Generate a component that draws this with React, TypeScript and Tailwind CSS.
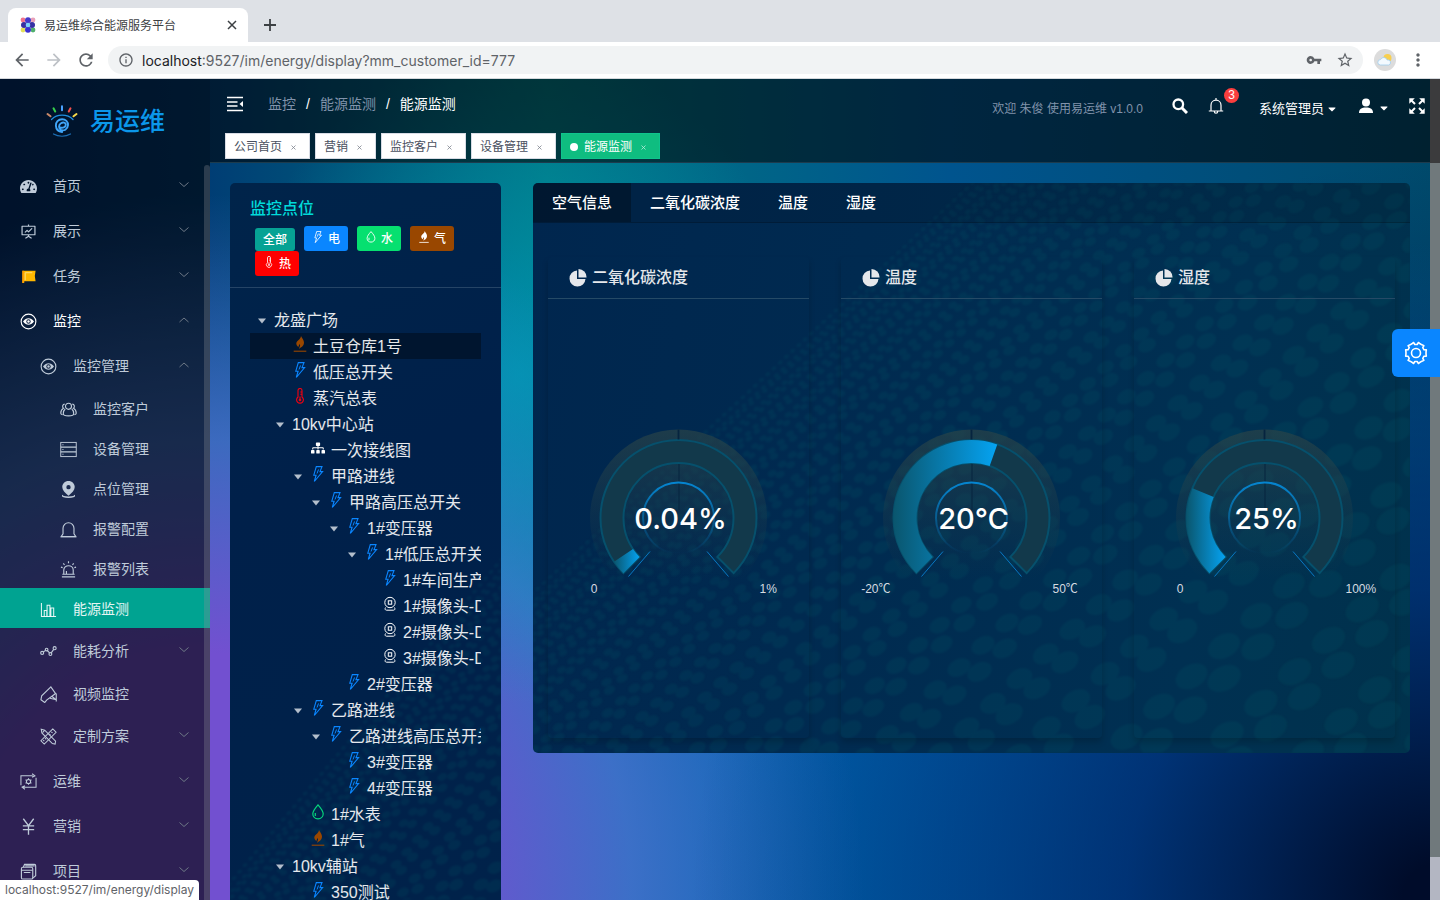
import { ReactNode, useState } from "react";
import clsx from "clsx";
import { AiOutlineFundProjectionScreen } from "react-icons/ai";
import { FaCaretDown, FaSitemap, FaTachometerAlt } from "react-icons/fa";
import { MdArrowBack, MdArrowForward, MdInfoOutline, MdMoreVert, MdRefresh, MdStarBorder, MdVpnKey } from "react-icons/md";

interface IconProps {
  className?: string;
  box?: number;
  width?: number;
  children: ReactNode;
}

const Icon = ({ className, box = 18, width = 1, children }: IconProps) => (
  <svg viewBox={`0 0 ${box} ${box}`} className={clsx("shrink-0", className)} fill="none" stroke="currentColor" strokeWidth={width} aria-hidden="true">
    {children}
  </svg>
);

/* ---------- icons ---------- */

const EyeIcon = () => (
  <Icon className="size-[17px]" width={1.2}>
    <circle cx="9" cy="9" r="7.8" />
    <path d="M3.2 9C5 6.600 7 5.600 9 5.600S13 6.600 14.800 9C13 11.400 11 12.400 9 12.400S5 11.400 3.200 9Z" fill="currentColor" stroke="none" />
    <circle cx="9" cy="9" r="2.300" className="fill-[#10203f]" stroke="none" />
    <circle cx="9" cy="9" r="1.300" fill="currentColor" stroke="none" />
  </Icon>
);

const FlagIcon = () => (
  <Icon className="size-[17px]">
    <path d="M2.500 3h14l-.8 5.500.8 5.500H4.500v2h-2z" fill="#ffb800" stroke="none" />
    <path d="M2.500 3h1.500v13H2.500z" fill="#ff9800" stroke="none" />
    <path d="M5.500 13V5H13" stroke="#ffe082" />
  </Icon>
);

const TeamIcon = () => (
  <Icon className="size-[17px]" width={1.2}>
    <circle cx="9" cy="5.600" r="3.200" />
    <path d="M5.500 8.500c-1.300 1-2 3-2 5 0 1.500 2.200 2.300 5.500 2.300s5.500-.8 5.500-2.300c0-2-.7-4-2-5" />
    <path d="M5 3.300a2.400 2.400 0 0 0-1.300 4.300C1.700 8.600.8 10.500.8 13c0 1 .7 1.300 2 1.500M13 3.300a2.400 2.400 0 0 1 1.300 4.300c2 1 2.900 2.900 2.900 5.400 0 1-.7 1.300-2 1.500" />
  </Icon>
);

const RackIcon = () => (
  <Icon className="size-[17px]">
    <rect x=".8" y="1.500" width="16.400" height="15" />
    <path d="M.8 6.500h16.400M.8 11.500h16.400" strokeWidth="1.400" />
    <path d="M2.500 4h1.200M2.500 9h1.200M2.500 14h1.200" />
  </Icon>
);

const PinIcon = () => (
  <Icon className="size-[17px]">
    <path fillRule="evenodd" d="M9 0c3.800 0 6.600 2.800 6.600 6.400 0 3.400-2.800 6-6.600 9.100-3.800-3.100-6.600-5.700-6.600-9.100C2.400 2.800 5.200 0 9 0zm0 4.200a2.300 2.300 0 1 0 0 4.600 2.300 2.300 0 0 0 0-4.600z" fill="currentColor" stroke="none" />
    <path d="M3 15c-1 1.500 1.500 2.200 6 2.200s7-.7 6-2.200" strokeWidth="1.400" />
  </Icon>
);

const AlarmIcon = () => (
  <Icon className="size-[17px]" width={1.2}>
    <path d="M3.200 13.500V7.800C3.200 4.300 5.800 1.800 9 1.800s5.800 2.500 5.800 6v5.700l2 3H1.200z" />
    <path d="M1 16.600h16" />
  </Icon>
);

const SirenIcon = () => (
  <Icon className="size-[17px]" width={1.2}>
    <path d="M4 14V9.600C4 6.900 6.300 5 9 5s5 1.900 5 4.600V14M2 16.800h14M2.500 14h13M6.800 14v-3.500" />
    <path d="M9 .3v2M3.500 2.500l1.300 1.500M14.500 2.500l-1.300 1.500M1 6.500l1.800.5M17 6.500l-1.800.5" />
  </Icon>
);

const BarIcon = () => (
  <Icon className="size-[17px]" width={1.1}>
    <path d="M1.500 2v14.500h15.500" />
    <path d="M4.500 16.500V10h2.700v6.500M7.500 16.500V4.500h3v12M11.500 16.500V7.500h3v9" />
  </Icon>
);

const TrendIcon = () => (
  <Icon className="size-[17px]" width={1.2}>
    <circle cx="2.300" cy="10.500" r="1.600" />
    <circle cx="7" cy="7" r="1.400" />
    <circle cx="11" cy="11.700" r="1.500" />
    <circle cx="15.500" cy="5.500" r="1.600" />
    <path d="m3.500 9.400 2.300-1.500M7.900 8.200l2.300 2.300M11.900 10.500l2.600-3.700" />
  </Icon>
);

const CameraIcon = () => (
  <Icon className="size-[17px]" width={1.2}>
    <path d="M11.500 1 1.800 10.300l-.8 4.200 4 3 2-2.500 9.500-7z" />
    <path d="M17.200 8v8.500M10.500 13l6.700 1.500M12.500 10.800l4.700 4" />
  </Icon>
);

const DesignIcon = () => (
  <Icon className="size-[17px]" width={1.1}>
    <path d="m1.300 1.300 3.700 1L16.500 14l-.5 3-2.900-.5L2 5.200z" />
    <path d="m13.500 1 3.500 3.500L4.500 17 1 13.500zM12 4l1.300 1.300M9.800 6.200l1.300 1.300M5.300 10.700l1.300 1.300M3.300 12.700l1.300 1.300" />
    <path d="m5 2.300-2.300 2.500" />
  </Icon>
);

const MaintainIcon = () => (
  <Icon className="size-[17px]" width={1.1}>
    <path d="M13.500 3H1v10M3.500 15H17V5M12.800.8l3 2.200-3 1.500M5.200 17.200l-3-2.200 3-1.500" />
    <circle cx="9" cy="9" r="2.200" />
    <path d="M9 5.500v1.300M9 11.200v1.300M5.900 7.200l1.200.7M10.900 10.100l1.200.7M5.900 10.800l1.200-.7M10.900 7.900l1.200-.7" />
  </Icon>
);

const YenIcon = () => (
  <Icon className="size-[17px]" width={1.400}>
    <path d="M3.500.8 9 8l5.500-7.200M9 8v9.800M3 8.300h12M3 12.300h12" />
  </Icon>
);

const ProjectIcon = () => (
  <Icon className="size-[17px]" width={1.200}>
    <rect x="1.500" y="4.500" width="12" height="12.500" rx="1.500" />
    <path d="M3.500 4.500 4.800 1.500h10.500a1.300 1.300 0 0 1 1.300 1.300v10.700l-3 2.500M1.500 7.700h12M4 10h7M5.500 3h10" />
  </Icon>
);

const BoltIcon = () => (
  <Icon box={16} className="h-4 w-4">
    <path d="M6.300.6h5.700L10 5.600h2.600L4.300 15.500l1.800-6.300H3.800z" strokeWidth="1.100" />
    <path d="M8.500 3.500 7 7.500" />
  </Icon>
);

const DropIcon = () => (
  <Icon box={16} className="h-4 w-4" width={1.200}>
    <path d="M8 .8c2.800 3.200 5.200 6.100 5.200 9 0 3-2.200 5-5.200 5s-5.200-2-5.200-5c0-2.900 2.400-5.800 5.200-9z" />
    <path d="M5.300 9v3" />
  </Icon>
);

const FlameIcon = () => (
  <Icon box={16} className="h-4 w-4">
    <path d="M9 0c.8 2.300 3 3.700 3 6.500 0 2.300-1.400 4.200-3.200 5-.6.300-.9.800-1.100 1.500-.5-.7-.4-1.500.1-2.400.5-1 .3-2-.3-2.600-.2 1.300-1 1.800-1 3C5 10.200 4.200 8.800 4.300 7.300 4.500 4.700 8.700 3.500 9 0z" fill="currentColor" stroke="none" />
    <path d="M1.700 15.200h12.600" strokeWidth="1.100" />
  </Icon>
);

const HeatIcon = () => (
  <Icon box={16} className="h-4 w-4" width={1.100}>
    <path d="M6 9V2.500a2 2 0 0 1 4 0V9a3.400 3.400 0 1 1-4 0z" />
    <path d="M8 8.500v3M8.300 4h1.700M8.300 6.300h1.700" />
    <circle cx="8" cy="12" r=".8" />
  </Icon>
);

const WebcamIcon = () => (
  <Icon box={16} className="h-4 w-4" width={1}>
    <circle cx="8" cy="6.500" r="5.200" />
    <rect x="6.300" y="4.800" width="3.400" height="3.400" />
    <path d="M3.500 11.500c-.8 1.500-.3 2.700 1 2.700h7c1.300 0 1.800-1.200 1-2.700" />
  </Icon>
);

const PieIcon = () => (
  <Icon className="size-[18px] text-gray-200">
    <path d="M8 1.500a8 8 0 1 0 8.500 8.500H8z" fill="currentColor" stroke="none" />
    <path d="M9.500 0v8.500h8A8 8 0 0 0 9.500 0z" fill="currentColor" stroke="none" />
  </Icon>
);

// six lobes round a hub
const gearPath = () => {
  const pts: string[] = [];
  for (let i = 0; i < 6; i++) {
    const base = i * 60;
    [[-22, 8.600], [-17, 10.800], [-6, 10.100], [6, 10.100], [17, 10.800], [22, 8.600]].forEach(([a, r]) => {
      const t = ((base + a) * Math.PI) / 180;
      pts.push(`${(12 + Math.cos(t) * r).toFixed(2)} ${(12 + Math.sin(t) * r).toFixed(2)}`);
    });
  }
  return `M${pts.join("L")}Z`;
};

const Logo = () => (
  <svg viewBox="0 0 32 32" className="size-8" fill="none" strokeLinecap="round" aria-hidden="true">
    <path d="m1.500 9 3 2.300" stroke="#c98a6a" strokeWidth="2" />
    <path d="m7.500 3.300 1.700 3.200" stroke="#35d04c" strokeWidth="2" />
    <path d="M16 1.300v4" stroke="#4aa3ff" strokeWidth="2" />
    <path d="m24.500 3.300-1.700 3.200" stroke="#f0504d" strokeWidth="2" />
    <path d="m30.500 9-3 2.300" stroke="#f4d94a" strokeWidth="2" />
    <path d="M5.500 14.500C9 11 12.500 10.200 16 10.200s7.500.8 11 4.300" stroke="#1f8fe0" strokeWidth="1.300" />
    <path d="M13.800 22.300c3 1 6-.2 6-2.500 0-2.200-2.600-2.900-4.800-1.600-2.500 1.600-2.600 5.200-.2 6.600 2.900 1.600 6.900-.3 7.200-4.500.2-3.900-2.500-6-5.900-6-3.900 0-6.400 2.900-6.200 6.300.2 3.700 2.700 6 6.200 6.400" stroke="#3fa5f8" strokeWidth="1.900" />
    <path d="M7.500 29c5 3 12 3 17 0" stroke="#1b6fb5" strokeWidth="1.200" />
  </svg>
);

const Favicon = () => (
  <svg viewBox="0 0 16 16" className="size-4" aria-hidden="true">
    <circle cx="3" cy="3" r="2.400" fill="#f0738d" />
    <circle cx="13" cy="3" r="2.400" fill="#e8a0b9" />
    <circle cx="3" cy="13" r="2.400" fill="#e3e05a" />
    <circle cx="13" cy="13" r="2.400" fill="#4fae6d" />
    <circle cx="8" cy="3.300" r="3" fill="#4338ca" />
    <circle cx="8" cy="12.700" r="3" fill="#3a2fd0" />
    <circle cx="4" cy="8" r="3" fill="#3730a3" />
    <circle cx="12" cy="8" r="3" fill="#3730a3" />
    <circle cx="8" cy="8" r="2.300" fill="#7dd3fc" />
  </svg>
);

/* ---------- browser frame ---------- */

const BrowserBar = () => (
  <div className="shrink-0 font-[Inter,'Noto_Sans_CJK_SC',sans-serif]">
    <div className="flex h-[42px] items-end bg-[#dee1e6] px-2">
      <div className="flex h-[34px] w-60 items-center rounded-t-lg bg-white pr-[11px] pl-3">
        <Favicon />
        <span className="ml-2 flex-1 pt-px text-[12px] text-[#3c4043]">易运维综合能源服务平台</span>
        <button aria-label="关闭标签页" className="text-[#3c4043]">
          <Icon box={10} width={1.500} className="size-[10px]"><path d="m1 1 8 8M9 1 1 9" /></Icon>
        </button>
      </div>
      <button aria-label="新标签页" className="mb-[11px] ml-4 text-[#3c4043]">
        <Icon box={12} width={1.800} className="size-3"><path d="M6 0v12M0 6h12" /></Icon>
      </button>
    </div>
    <div className="flex h-[37px] items-center border-b border-[#d5d8dc] bg-white pr-3 pl-3 text-[#5f6368]">
      <button aria-label="后退"><MdArrowBack className="size-5" /></button>
      <button aria-label="前进" className="ml-3 text-[#bdc1c6]"><MdArrowForward className="size-5" /></button>
      <button aria-label="刷新" className="ml-3"><MdRefresh className="size-5" /></button>
      <div className="ml-3 flex h-7 flex-1 items-center rounded-full bg-[#f1f3f4] pr-[9px] pl-[10px]">
        <MdInfoOutline className="size-4" />
        <label htmlFor="url" className="ml-2 text-[14px] text-[#202124]">localhost</label>
        <input id="url" defaultValue=":9527/im/energy/display?mm_customer_id=777" className="min-w-0 flex-1 bg-transparent text-[14px] outline-none" />
        <MdVpnKey className="size-4" />
        <MdStarBorder className="ml-[14px] size-[18px]" />
      </div>
      <span className="ml-[11px] flex size-[22px] items-center justify-center rounded-full bg-[#dcdcdc]">
        <svg viewBox="0 0 16 16" className="size-4" aria-hidden="true">
          <circle cx="10.500" cy="6" r="4" fill="#f8cf4e" />
          <path d="M3.500 13a2.700 2.700 0 0 1 0-5.400 3.600 3.600 0 0 1 6.700.4 2.600 2.600 0 0 1 1.500 5z" fill="#f3faff" stroke="#9fcdec" strokeWidth=".8" />
        </svg>
      </span>
      <button aria-label="更多" className="ml-3"><MdMoreVert className="size-5" /></button>
    </div>
  </div>
);

/* ---------- sidebar ---------- */

interface MenuItem {
  label: string;
  icon: ReactNode;
  level: 0 | 1 | 2;
  arrow?: "up" | "down";
  open?: boolean;
  active?: boolean;
}

const menu: MenuItem[] = [
  { label: "首页", icon: <FaTachometerAlt className="size-[17px]" />, level: 0, arrow: "down" },
  { label: "展示", icon: <AiOutlineFundProjectionScreen className="size-[17px]" />, level: 0, arrow: "down" },
  { label: "任务", icon: <FlagIcon />, level: 0, arrow: "down" },
  { label: "监控", icon: <EyeIcon />, level: 0, arrow: "up", open: true },
  { label: "监控管理", icon: <EyeIcon />, level: 1, arrow: "up" },
  { label: "监控客户", icon: <TeamIcon />, level: 2 },
  { label: "设备管理", icon: <RackIcon />, level: 2 },
  { label: "点位管理", icon: <PinIcon />, level: 2 },
  { label: "报警配置", icon: <AlarmIcon />, level: 2 },
  { label: "报警列表", icon: <SirenIcon />, level: 2 },
  { label: "能源监测", icon: <BarIcon />, level: 1, active: true },
  { label: "能耗分析", icon: <TrendIcon />, level: 1, arrow: "down" },
  { label: "视频监控", icon: <CameraIcon />, level: 1 },
  { label: "定制方案", icon: <DesignIcon />, level: 1, arrow: "down" },
  { label: "运维", icon: <MaintainIcon />, level: 0, arrow: "down" },
  { label: "营销", icon: <YenIcon />, level: 0, arrow: "down" },
  { label: "项目", icon: <ProjectIcon />, level: 0, arrow: "down" },
];

const indent = ["pl-5", "pl-10", "pl-[60px]"];

const Sidebar = () => (
  <aside className="relative flex w-[210px] shrink-0 flex-col overflow-hidden bg-black/60">
    <div className="flex h-[84px] shrink-0 items-center gap-3 pl-[46px]">
      <Logo />
      <h1 className="text-[25px] leading-8 font-medium text-[#0b97ea]">易运维</h1>
    </div>
    <nav className="min-h-0 flex-1 overflow-hidden">
      {menu.map((item) => (
        <a
          key={item.label}
          href="#"
          className={clsx(
            "flex items-center pr-5 text-[14px]",
            indent[item.level],
            item.arrow ? "h-[45px] pt-px" : "h-10 pt-[2px]",
            item.active ? "bg-[#00a391] text-white/90" : item.open ? "text-white" : "text-[#bfcbd9]",
          )}
        >
          {item.icon}
          <span className="ml-4 flex-1">{item.label}</span>
          {item.arrow && (
            <Icon box={12} width={1} className="mb-[2px] size-3 text-[#6d7886]">
              <path d={item.arrow === "down" ? "m1.500 3.500 4.500 4 4.500-4" : "m1.500 8 4.500-4 4.500 4"} />
            </Icon>
          )}
        </a>
      ))}
    </nav>
    <div className="absolute top-[86px] right-0 bottom-0 w-[6px] rounded-t-full bg-[#909399]/30" />
  </aside>
);

/* ---------- header ---------- */

const tags = ["公司首页", "营销", "监控客户", "设备管理", "能源监测"];

const Header = () => (
  <header className="h-[84px] shrink-0 border-b border-[#1d3b4d] bg-black/55">
    <div className="flex h-[50px] items-center pr-[5px] pl-[17px] text-white">
      <button aria-label="收起菜单">
        <Icon box={16} width={1.400} className="size-4">
          <path d="M0 1.500h16M0 6h10.500M0 10h10.500M0 14.500h16" />
          <path d="M16 5v6l-3.500-3z" fill="currentColor" stroke="none" />
        </Icon>
      </button>
      <nav className="ml-[25px] flex items-center text-[14px]">
        <a href="#" className="text-[#8193ab]">监控</a>
        <span className="mx-[10px]">/</span>
        <a href="#" className="text-[#8193ab]">能源监测</a>
        <span className="mx-[10px]">/</span>
        <span>能源监测</span>
      </nav>
      <div className="ml-auto flex items-center pt-2">
        <span className="pt-px text-[12px] text-[#8193ab]">欢迎 朱俊 使用易运维 v1.0.0</span>
        <button aria-label="搜索" className="ml-[29px]">
          <Icon box={16} width={2.300} className="mb-1 size-4"><circle cx="6.300" cy="6.300" r="4.800" /><path d="m9.800 9.800 5.200 5.200" strokeWidth="3" /></Icon>
        </button>
        <button aria-label="通知" className="relative ml-5">
          <Icon box={16} width={1.200} className="mb-1 size-4">
            <path d="M8 0v2M3 12.500V7.200C3 4.300 5.200 2.200 8 2.200s5 2.100 5 5v5.300M.8 13h14.400M6.300 13.500c0 2.300 3.400 2.300 3.400 0" />
          </Icon>
          <span className="absolute -top-[10px] left-4 size-[15px] rounded-full bg-[#fa3e3e] text-center text-[12px] leading-[15px]">3</span>
        </button>
        <button className="ml-[35px] flex items-center pt-px text-[13px]">
          系统管理员 <FaCaretDown className="ml-[2px] size-3" />
        </button>
        <button aria-label="用户" className="ml-5 flex items-center">
          <Icon box={16} className="mb-1 size-4">
            <circle cx="8" cy="4.500" r="4" fill="currentColor" stroke="none" />
            <path d="M1 15c0-4 2.500-5.500 7-5.500s7 1.500 7 5.500z" fill="currentColor" stroke="none" />
          </Icon>
          <FaCaretDown className="ml-1 size-3" />
        </button>
        <button aria-label="全屏" className="ml-[19px]">
          <Icon box={16} width={2} className="mb-1 size-4">
            <path d="m2 2 4 4M14 2l-4 4M2 14l4-4M14 14l-4-4" />
            <path d="M.3.3h5.500L.3 5.800zM15.700.3v5.500L10.200.3zM.3 15.700v-5.500l5.500 5.500zM15.700 15.700h-5.500l5.500-5.500z" fill="currentColor" stroke="none" />
          </Icon>
        </button>
      </div>
    </div>
    <div className="flex gap-[5px] pt-1 pl-[15px]">
      {tags.map((tag, i) => (
        <div
          key={tag}
          className={clsx(
            "flex h-[26px] items-center border px-2 pt-px text-[12px]",
            i === tags.length - 1 ? "border-[#0fc48d] bg-[#0fbd80] text-white" : "border-[#d8dce5] bg-white text-[#495060]",
          )}
        >
          {i === tags.length - 1 && <span className="mr-[6px] size-2 rounded-full bg-white" />}
          <a href="#">{tag}</a>
          <button aria-label={`关闭${tag}`} className="ml-[3px] flex size-4 items-center justify-center pt-px opacity-70">
            <Icon box={5} width={0.8} className="size-[5px]"><path d="m.5.5 4 4M4.500.5l-4 4" /></Icon>
          </button>
        </div>
      ))}
    </div>
  </header>
);

/* ---------- dotted surface behind the cards ---------- */

interface DotsProps {
  w: number;
  h: number;
  from: number;
  angle: number;
}

const DotField = ({ w, h, from, angle }: DotsProps) => {
  const a = (angle * Math.PI) / 180;
  const dots: ReactNode[] = [];
  let v = 0;
  let step = 5;
  let row = 0;
  while (v < w + h) {
    const gap = step * 1.3 + 2;
    for (let s = -w - h; s < w + h; s += gap) {
      const x = (s + (row % 2) * gap * 0.4) * Math.cos(a) + v * Math.sin(a);
      const y = from - s * Math.sin(a) + v * Math.cos(a);
      if (x > -20 && x < w + 20 && y > -20 && y < h + 20) {
        dots.push(<ellipse key={`${row}-${Math.round(s)}`} cx={x} cy={y} rx={step * 0.52} ry={step * 0.36} transform={`rotate(-28 ${x} ${y})`} />);
      }
    }
    v += step;
    step = Math.min(step * 1.055, 34);
    row++;
  }
  return (
    <svg viewBox={`0 0 ${w} ${h}`} preserveAspectRatio="xMidYMid slice" className="pointer-events-none absolute inset-0 h-full w-full fill-[#006870] opacity-15 blur-[1px]" aria-hidden="true">
      {dots}
    </svg>
  );
};

/* ---------- point tree ---------- */

const kinds = {
  bolt: { icon: <BoltIcon />, color: "text-[#0a86ff]" },
  drop: { icon: <DropIcon />, color: "text-[#06d67d]" },
  flame: { icon: <FlameIcon />, color: "text-[#994700]" },
  heat: { icon: <HeatIcon />, color: "text-[#f5000f]" },
  cam: { icon: <WebcamIcon />, color: "text-white" },
  map: { icon: <FaSitemap className="mx-px size-[14px]" />, color: "text-white" },
};

interface TreeNode {
  label: string;
  level: number;
  kind?: keyof typeof kinds;
  open?: boolean;
}

const nodes: TreeNode[] = [
  { label: "龙盛广场", level: 0, open: true },
  { label: "土豆仓库1号", level: 1, kind: "flame" },
  { label: "低压总开关", level: 1, kind: "bolt" },
  { label: "蒸汽总表", level: 1, kind: "heat" },
  { label: "10kv中心站", level: 1, open: true },
  { label: "一次接线图", level: 2, kind: "map" },
  { label: "甲路进线", level: 2, kind: "bolt", open: true },
  { label: "甲路高压总开关", level: 3, kind: "bolt", open: true },
  { label: "1#变压器", level: 4, kind: "bolt", open: true },
  { label: "1#低压总开关", level: 5, kind: "bolt", open: true },
  { label: "1#车间生产线", level: 6, kind: "bolt" },
  { label: "1#摄像头-DS", level: 6, kind: "cam" },
  { label: "2#摄像头-DS", level: 6, kind: "cam" },
  { label: "3#摄像头-DS", level: 6, kind: "cam" },
  { label: "2#变压器", level: 4, kind: "bolt" },
  { label: "乙路进线", level: 2, kind: "bolt", open: true },
  { label: "乙路进线高压总开关", level: 3, kind: "bolt", open: true },
  { label: "3#变压器", level: 4, kind: "bolt" },
  { label: "4#变压器", level: 4, kind: "bolt" },
  { label: "1#水表", level: 2, kind: "drop" },
  { label: "1#气", level: 2, kind: "flame" },
  { label: "10kv辅站", level: 1, open: true },
  { label: "350测试", level: 2, kind: "bolt" },
];

const treeIndent = ["pl-0", "pl-[18px]", "pl-9", "pl-[54px]", "pl-[72px]", "pl-[90px]", "pl-[108px]"];

const filters = [
  { label: "电", icon: <BoltIcon />, color: "bg-[#0a86ff]" },
  { label: "水", icon: <DropIcon />, color: "bg-[#06e070]" },
  { label: "气", icon: <FlameIcon />, color: "bg-[#994700]" },
  { label: "热", icon: <HeatIcon />, color: "bg-[#ff0000]" },
];

const PointPanel = () => {
  const [selected, setSelected] = useState("土豆仓库1号");
  return (
    <section className="relative w-[271px] shrink-0 overflow-hidden rounded-t-[5px] bg-[linear-gradient(160deg,#00244a,#00204a_40%,#00224a)]">
      <DotField w={271} h={717} from={700} angle={50} />
      <div className="relative border-b border-[#254466] px-5 pt-[14px] pb-[11px]">
        <h2 className="text-[16px] leading-6 font-medium text-[#00dada]">监控点位</h2>
        <div className="mt-[5px] flex flex-wrap items-end gap-x-[9px] pl-[5px] text-[12px] font-medium text-white">
          <button className="h-[23px] rounded-[3px] bg-[#06a294] px-2">全部</button>
          {filters.map((f) => (
            <button key={f.label} className={clsx("flex h-[25px] items-center gap-1 rounded-[3px] px-2", f.color)}>
              <span className="pb-1 [&_svg]:size-3">{f.icon}</span>
              {f.label}
            </button>
          ))}
        </div>
      </div>
      <ul className="relative mx-5 mt-[19px]">
        {nodes.map((node) => (
          <li key={node.label} className={clsx("overflow-hidden", selected === node.label && "bg-[#00152f]")}>
            <button onClick={() => setSelected(node.label)} className={clsx("flex h-[26px] items-center pt-px text-[16px] whitespace-nowrap text-white/90", treeIndent[node.level])}>
              <span className="flex w-6 shrink-0 justify-center">
                {node.open && <Icon box={8} className="size-2 text-[#b4bfcc]"><path d="M0 1.500h8L4 6.500z" fill="currentColor" stroke="none" /></Icon>}
              </span>
              {node.kind && <span className={clsx("mr-[5px] shrink-0 pb-[5px]", kinds[node.kind].color)}>{kinds[node.kind].icon}</span>}
              {node.label}
            </button>
          </li>
        ))}
      </ul>
    </section>
  );
};

/* ---------- gauges ---------- */

// point on a circle, 0deg is the top
const polar = (r: number, deg: number) => {
  const t = (deg * Math.PI) / 180;
  return `${(r * Math.sin(t)).toFixed(2)} ${(-r * Math.cos(t)).toFixed(2)}`;
};

const band = (from: number, to: number) => {
  const large = to - from > 180 ? 1 : 0;
  return `M${polar(78, from)}A78 78 0 ${large} 1 ${polar(78, to)}L${polar(55, to)}A55 55 0 ${large} 0 ${polar(55, from)}Z`;
};

interface GaugeProps {
  id: string;
  title: string;
  value: string;
  ratio: number;
  min: string;
  max: string;
}

const gauges: GaugeProps[] = [
  { id: "co2", title: "二氧化碳浓度", value: "0.04%", ratio: 0.04, min: "0", max: "1%" },
  { id: "temp", title: "温度", value: "20℃", ratio: 40 / 70, min: "-20℃", max: "50℃" },
  { id: "hum", title: "湿度", value: "25%", ratio: 0.25, min: "0", max: "100%" },
];

const Gauge = ({ id, title, value, ratio, min, max }: GaugeProps) => (
  <article className="rounded-[4px] shadow-[0_4px_6px_rgba(0,0,0,0.18)]">
    <h3 className="flex h-[42px] items-center gap-[5px] border-b border-[#254a66] pl-[21px] text-[16px] font-medium text-gray-200">
      <PieIcon />
      {title}
    </h3>
    <div className="flex min-h-[439px] items-center justify-center">
      <svg viewBox="-130 -99 260 200" className="h-[200px] w-full" role="img" aria-label={`${title} ${value}`}>
        <defs>
          <linearGradient id={`${id}-fill`}>
            <stop offset="0" stopColor="#0a566e" />
            <stop offset="1" stopColor="#05a3f2" />
          </linearGradient>
          <linearGradient id={`${id}-disk`} x2="0" y2="1">
            <stop offset="0" stopColor="#2a4448" stopOpacity=".7" />
            <stop offset=".85" stopColor="#1c3c4c" stopOpacity="0" />
          </linearGradient>
          <linearGradient id={`${id}-ring`} x2="0" y2="1">
            <stop offset="0" stopColor="#0585d0" />
            <stop offset="1" stopColor="#0585d0" stopOpacity="0" />
          </linearGradient>
        </defs>
        <circle r="88.500" fill={`url(#${id}-disk)`} />
        <path d={band(-135, 135)} fill="#12394b" stroke="#06506c" strokeWidth="2" />
        <path d={band(-135, -135 + 270 * ratio)} fill={`url(#${id}-fill)`} />
        <path d="M0-88.500v10" stroke="#06243f" strokeWidth="1.800" />
        <path d="M.5-54v46" stroke="#06243f" strokeWidth="1" />
        <circle r="35.500" fill="none" stroke={`url(#${id}-ring)`} strokeWidth="2" />
        <path d="M-28.500 33.500-50 58.500M28.500 33.500 50 58.500" stroke="#0878c4" />
        <text x="2" y="11" textAnchor="middle" className="fill-white font-[Inter,'Noto_Sans_CJK_SC',sans-serif] text-[29px] font-medium">{value}</text>
        <text x="-81" y="75" textAnchor="end" className="fill-[#d5dbe1] text-[12px]">{min}</text>
        <text x="81" y="75" className="fill-[#d5dbe1] text-[12px]">{max}</text>
      </svg>
    </div>
  </article>
);

const GaugePanel = () => {
  const tabs = ["空气信息", "二氧化碳浓度", "温度", "湿度"];
  const [tab, setTab] = useState(tabs[0]);
  return (
    <section className="relative min-w-0 flex-1 self-start overflow-hidden rounded-[5px] bg-[linear-gradient(100deg,#00264e,#002a50_35%,#003052_75%,#00324c)]">
      <DotField w={877} h={570} from={410} angle={43} />
      <div className="relative flex h-10 border-b border-black/20 bg-black/10" role="tablist">
        {tabs.map((t) => (
          <button
            key={t}
            role="tab"
            aria-selected={t === tab}
            onClick={() => setTab(t)}
            className={clsx("px-[19px] pt-px text-[15px] font-medium text-white", t === tab && "bg-black/30")}
          >
            {t}
          </button>
        ))}
      </div>
      <div className="relative grid grid-cols-3 gap-8 px-[15px] pt-[34px] pb-[15px]">
        {gauges.map((g) => <Gauge key={g.id} {...g} />)}
      </div>
    </section>
  );
};

const App = () => (
  <div className="flex h-screen flex-col overflow-hidden font-['Liberation_Sans','Noto_Sans_CJK_SC',sans-serif]">
    <BrowserBar />
    <div className="relative flex min-h-0 flex-1 bg-[radial-gradient(ellipse_52%_90%_at_100%_100%,#000c2a_5%,rgba(0,20,80,0.6)_42%,rgba(0,24,100,0)_100%),radial-gradient(ellipse_20%_40%_at_36%_36%,rgba(0,160,190,0.7),rgba(0,160,200,0)),radial-gradient(ellipse_46%_86%_at_14%_100%,#7250d0_35%,rgba(80,116,208,0.75)_65%,rgba(10,98,180,0)_100%),linear-gradient(180deg,rgba(0,98,176,0)_20%,rgba(0,98,176,0.95)_80%),linear-gradient(90deg,#002e6c_0%,#003c74_14%,#007680_38%,#00548e_66%,#004a6b_100%)]">
      <Sidebar />
      <main className="flex min-w-0 flex-1 flex-col">
        <Header />
        <div className="flex min-h-0 flex-1 gap-8 overflow-hidden px-5 pt-5">
          <PointPanel />
          <GaugePanel />
        </div>
      </main>
      <div className="flex w-[10px] shrink-0 flex-col">
        <div className="h-[84px] bg-[#3b3b3d]" />
        <div className="flex-1 bg-[#70797c]" />
        <div className="h-[43px] bg-[#b3b6c2]" />
      </div>
      <button aria-label="设置" className="absolute top-[250px] right-0 flex size-12 items-center justify-center rounded-l-md bg-[#0a86ff] text-white">
        <Icon box={24} width={1.600} className="size-6">
          <path d={gearPath()} strokeLinejoin="round" />
          <circle cx="12" cy="12" r="4.500" />
        </Icon>
      </button>
      <div className="absolute bottom-0 left-0 h-5 rounded-tr-[4px] bg-white px-[5px] font-[Inter,sans-serif] text-[12px] leading-5 text-[#5f6368]">
        localhost:9527/im/energy/display
      </div>
    </div>
  </div>
);

export default App;
